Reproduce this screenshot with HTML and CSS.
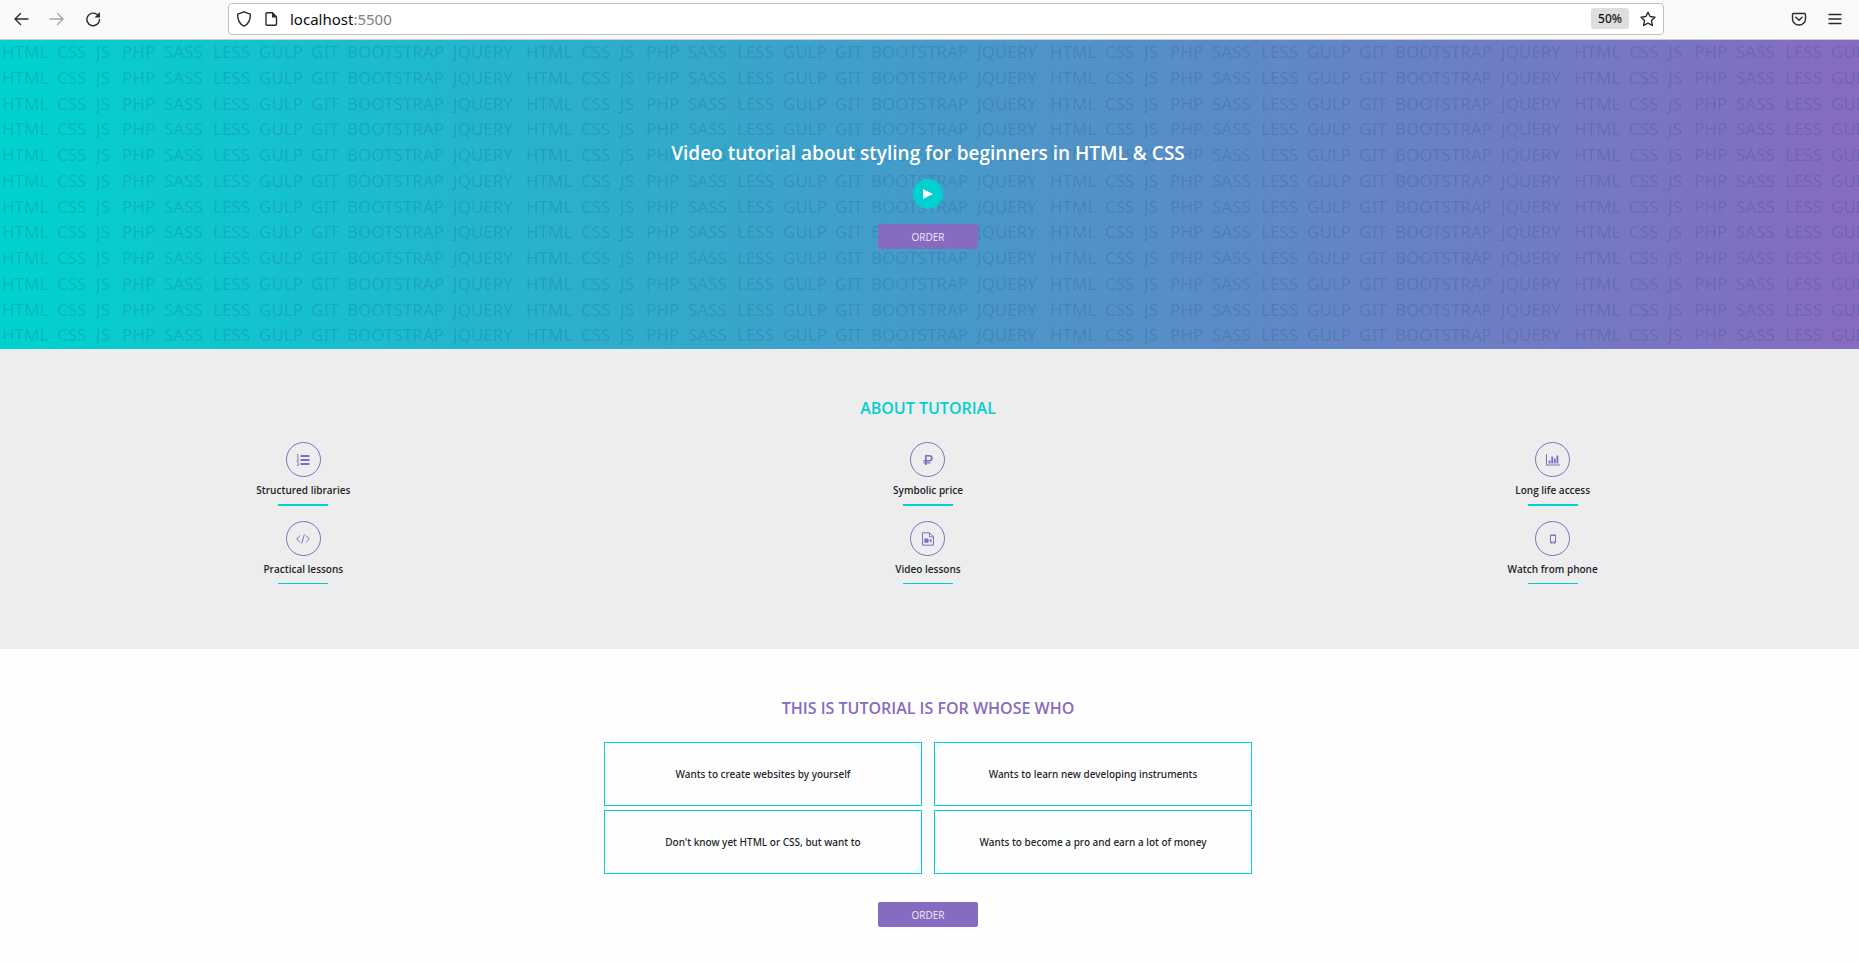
FILE: index.html
```html
<!DOCTYPE html>
<html lang="en">
<head>
<meta charset="utf-8">
<title>Video tutorial</title>
<link rel="stylesheet" href="styles.css">
</head>
<body>
<nav class="toolbar" aria-label="Browser">
  <div class="nav-buttons">
    <button class="tool" type="button" aria-label="Back"><svg viewBox="0 0 16 16"><path d="M15 8H2M7.500 2.500 2 8l5.500 5.500"/></svg></button>
    <button class="tool" type="button" aria-label="Forward" disabled><svg viewBox="0 0 16 16"><path d="M1 8h13M8.500 2.500 14 8l-5.500 5.500"/></svg></button>
    <button class="tool" type="button" aria-label="Reload"><svg viewBox="0 0 16 16"><path d="M14.500 8.500A6.300 6.300 0 1 1 12.500 3.800"/><path class="solid" d="M15 1v5.500H9.500z"/></svg></button>
  </div>
  <div class="address">
    <svg class="icon" viewBox="0 0 16 16"><path d="M8 .8 14.300 3.200c.3 5.300-1.600 9.600-6.300 12C3.300 12.800 1.400 8.500 1.700 3.200z"/></svg>
    <svg class="icon" viewBox="0 0 16 16"><path d="M4 1.700h5.500L13.500 6v7.300q0 1-1 1H4q-1 0-1-1V2.700q0-1 1-1z"/><path class="solid" d="M9 1.500 13.800 6.500H9z"/></svg>
    <div class="url" role="textbox" aria-label="Address">localhost<span class="port">:5500</span></div>
    <button class="zoom" type="button">50%</button>
    <button class="tool" type="button" aria-label="Bookmark"><svg viewBox="0 0 16 16"><path d="m8 1.200 2.100 4.300 4.900.7-3.500 3.400.9 4.900L8 12.200l-4.400 2.300.9-4.900L1 6.200l4.900-.7z"/></svg></button>
  </div>
  <div class="menu-buttons">
    <button class="tool" type="button" aria-label="Pocket"><svg viewBox="0 0 16 16"><path d="M2.500 2.500h11q1 0 1 1V8a6.500 6 0 0 1-13 0V3.500q0-1 1-1zM4.800 6.300 8 9.300l3.200-3"/></svg></button>
    <button class="tool" type="button" aria-label="Menu"><svg viewBox="0 0 16 16"><path d="M2 3.500h12M2 8h12M2 12.500h12"/></svg></button>
  </div>
</nav>

<header class="hero">
  <div class="words" aria-hidden="true"></div>
  <div class="hero-content">
    <h1 class="title">Video tutorial about styling for beginners in HTML &amp; CSS</h1>
    <button class="play" type="button" aria-label="Play"><svg viewBox="0 0 10 10"><path d="M0 0v10l10-5z"/></svg></button>
    <button class="order" type="button">ORDER</button>
  </div>
</header>

<main>
  <section class="about">
    <h2 class="heading">ABOUT TUTORIAL</h2>
    <div class="features">
      <div class="feature"><span class="badge"><svg viewBox="0 0 14 14"><path d="M4.500 2h9v2h-9zM4.500 6h9v2h-9zM4.500 10h9v2h-9zM1.300 1h1v3h.6v.6H.8V4h.6V2H.9zM.7 5.400h2v1.500l-1 .9h1v.7h-2v-.9l1.200-1v-.5H.7zM.7 9.400h2.100v3.700H.7v-.7h1.300v-.8h-.8v-.7h.8v-.8H.7z"/></svg></span><h3 class="label">Structured libraries</h3></div>
      <div class="feature"><span class="badge"><svg viewBox="0 0 14 14"><path fill-rule="evenodd" d="M4 2h4.500a3.200 3.200 0 0 1 0 6.400H5.700v.9h3.800v1.200H5.700V12H4v-1.500H2.500V9.300H4v-.9H2.500V7H4zM5.700 3.500V7h2.600a1.700 1.700 0 0 0 0-3.500z"/></svg></span><h3 class="label">Symbolic price</h3></div>
      <div class="feature"><span class="badge"><svg viewBox="0 0 14 14"><path d="M0 1h1v10.500h13v1H0zM2.700 7.500h1.800v3H2.700zM5.300 3.500h1.800v7H5.300zM7.900 5.500h1.800v5H7.900zM10.500 2.500h1.800v8h-1.800z"/></svg></span><h3 class="label">Long life access</h3></div>
      <div class="feature"><span class="badge"><svg viewBox="0 0 14 14"><path class="line" d="M4 3.500.8 7 4 10.500M10 3.500 13.200 7 10 10.500M8.300 2.500 5.700 11.500"/></svg></span><h3 class="label">Practical lessons</h3></div>
      <div class="feature"><span class="badge"><svg viewBox="0 0 14 14"><path class="line" d="M1.500.8h7l4 4v8.400h-11zM8.500.8v4h4"/><path d="M3.300 6.500h4.200v4.300H3.300zM8 8.600l2.500-2v4.200z"/></svg></span><h3 class="label">Video lessons</h3></div>
      <div class="feature"><span class="badge"><svg viewBox="0 0 14 14"><path fill-rule="evenodd" d="M5 2.500h4q1 0 1 1v7q0 1-1 1H5q-1 0-1-1v-7q0-1 1-1zM5 4v5.500h4V4zM6.500 10.100v.8h1v-.8z"/></svg></span><h3 class="label">Watch from phone</h3></div>
    </div>
  </section>

  <section class="audience">
    <h2 class="heading heading-purple">THIS IS TUTORIAL IS FOR WHOSE WHO</h2>
    <ul class="cards">
      <li class="card">Wants to create websites by yourself</li>
      <li class="card">Wants to learn new developing instruments</li>
      <li class="card">Don't know yet HTML or CSS, but want to</li>
      <li class="card">Wants to become a pro and earn a lot of money</li>
    </ul>
    <button class="order" type="button">ORDER</button>
  </section>
</main>
<script src="words.js"></script>
</body>
</html>
```

FILE: styles.css
```css
* { box-sizing: border-box; }

body {
  margin: 0;
  background: #fefefe;
  color: #212529;
  font-family: "Open Sans", "Noto Sans", sans-serif;
  overflow-x: hidden;
}

button { border: 0; padding: 0; background: none; font: inherit; color: inherit; }
h1, h2, h3, ul { margin: 0; padding: 0; }

/* Browser toolbar */
.toolbar {
  display: flex;
  align-items: center;
  height: 40px;
  padding: 0 16px 2px 13px;
  background: #fafafa;
  border-bottom: 1px solid #cccccc;
  font-family: "Noto Sans", sans-serif;
}
.nav-buttons { display: flex; flex: none; gap: 20px; width: 215px; }
.menu-buttons { display: flex; flex: none; justify-content: flex-end; gap: 20px; width: 179px; }
.tool, .icon { display: block; flex: none; width: 16px; height: 16px; }
.tool svg { display: block; width: 16px; height: 16px; }
.tool path, .icon path { fill: none; stroke: #2b2a33; stroke-width: 1.4; stroke-linejoin: round; stroke-linecap: round; }
.tool .solid, .icon .solid { fill: #2b2a33; stroke: none; }
.tool:disabled { opacity: 0.4; }
.address {
  display: flex;
  align-items: center;
  flex: 1;
  gap: 11px;
  height: 32px;
  padding: 0 7px;
  background: #ffffff;
  border: 1px solid #bfbfc3;
  border-radius: 4px;
}
.url { flex: 1; font-size: 15px; line-height: 20px; color: #0c0c0d; }
.port { color: #808080; }
.zoom { width: 38px; height: 21px; border-radius: 3px; background: #dedede; font-size: 12px; line-height: 20px; font-weight: 500; color: #15141a; }

/* Hero */
.hero {
  display: grid;
  height: 309px;
  overflow: hidden;
  background: linear-gradient(to right, #00d2d0, #469aca 50%, #876bc1);
}
.words, .hero-content { grid-area: 1 / 1; min-width: 0; }
.words {
  display: grid;
  grid-template-rows: repeat(12, 1fr);
  padding-left: 2px;
  overflow: hidden;
  color: rgba(0, 30, 60, 0.14);
  font-family: "Noto Sans", sans-serif;
  font-size: 17px;
  line-height: 24px;
  white-space: nowrap;
}
.words-row {
  display: grid;
  grid-template-columns: repeat(4, 55px 39px 26px 42px 49px 46px 52px 36px 106px 73px);
}
.hero-content {
  z-index: 1;
  display: flex;
  flex-direction: column;
  align-items: center;
  padding: 99px 3px 0 0;
}
.title { color: #ffffff; font-size: 19px; line-height: 28px; font-weight: 600; }
.play {
  display: flex;
  align-items: center;
  justify-content: center;
  width: 30px;
  height: 30px;
  margin: 12px 0 15px;
  border-radius: 50%;
  background: #00d0d0;
}
.play svg { width: 10px; height: 10px; fill: #ffffff; }
.order {
  width: 100px;
  height: 25px;
  padding-top: 2px;
  border-radius: 2px;
  background: #876bc1;
  color: #eeeaf6;
  font-size: 10px;
  line-height: 23px;
}

/* Sections */
.about, .audience {
  display: flex;
  flex-direction: column;
  align-items: center;
  padding: 47px 3px 0 0;
}
.about { padding-bottom: 65px; background: #ededed; overflow: hidden; }
.heading { color: #00d0d0; font-size: 16px; line-height: 24px; font-weight: 600; }
.heading-purple { color: #876bc1; }
.features {
  align-self: stretch;
  display: grid;
  grid-template-columns: repeat(3, 1fr);
  row-gap: 15px;
  margin: 22px -9px 0;
}
.feature { display: flex; flex-direction: column; align-items: center; }
.badge {
  display: flex;
  align-items: center;
  justify-content: center;
  width: 35px;
  height: 35px;
  border: 1px solid #876bc1;
  border-radius: 50%;
}
.badge svg { width: 14px; height: 14px; fill: #876bc1; }
.badge .line { fill: none; stroke: #876bc1; stroke-width: 1; }
.label { padding: 6px 0; font-size: 10px; line-height: 15px; font-weight: 600; }
.feature::after { content: ""; width: 50px; height: 2px; background: #00d0d0; }
.feature:nth-child(n+4)::after { height: 1px; }

.cards {
  display: grid;
  grid-template-columns: 1fr 1fr;
  gap: 4px 12px;
  width: 100%;
  max-width: 648px;
  margin: 22px 0 28px;
  list-style: none;
}
.card {
  padding: 24px 8px;
  border: 1px solid #00d0d0;
  font-family: "Noto Sans", sans-serif;
  font-size: 10px;
  line-height: 14px;
  font-weight: 500;
  text-align: center;
}
```

FILE: words.js
```js
const words = ["HTML", "CSS", "JS", "PHP", "SASS", "LESS", "GULP", "GIT", "BOOTSTRAP", "JQUERY"];
const backdrop = document.querySelector(".words");
for (let row = 0; row < 12; row++) {
  const line = document.createElement("div");
  line.className = "words-row";
  for (let i = 0; i < words.length * 4; i++) {
    const word = document.createElement("span");
    word.textContent = words[i % words.length];
    line.append(word);
  }
  backdrop.append(line);
}
```
